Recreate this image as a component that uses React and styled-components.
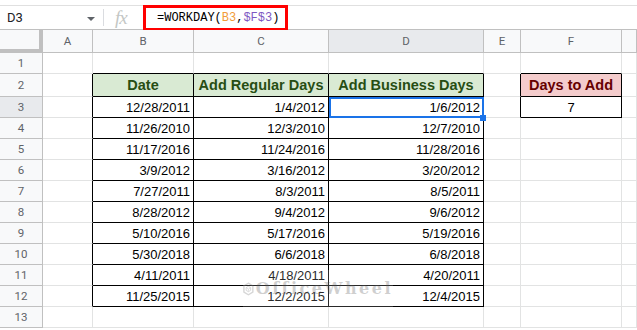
import React from "react";
import styled, { createGlobalStyle } from "styled-components";

const GlobalStyle = createGlobalStyle`
  body {
    margin: 0;
    background: #fff;
    font-family: "Liberation Sans", Arial, sans-serif;
    overflow: hidden;
  }
`;

const Page = styled.div`
  position: relative;
  width: 637px;
  height: 330px;
  overflow: hidden;
`;

const FormulaBar = styled.div`
  margin-top: 5px;
  height: 25px;
  box-sizing: border-box;
  border-top: 1px solid #e0e0e0;
  border-bottom: 1px solid #c0c0c0;
  display: flex;
  align-items: center;
`;

const NameBox = styled.div`
  width: 103px;
  height: 100%;
  box-sizing: border-box;
  padding: 0 8px 0 7px;
  display: flex;
  align-items: center;
  justify-content: space-between;
  font-family: Roboto, "Liberation Sans", sans-serif;
  font-size: 13px;
  color: #202124;
`;

const Caret = styled.span`
  width: 0;
  height: 0;
  border-left: 4px solid transparent;
  border-right: 4px solid transparent;
  border-top: 4px solid #5f6368;
  margin-top: 2px;
`;

const Divider = styled.div`
  width: 1px;
  height: 17px;
  background: #dadce0;
`;

const FxLabel = styled.div`
  width: 39px;
  padding-left: 11px;
  box-sizing: border-box;
  font-family: "Liberation Serif", "Times New Roman", serif;
  font-style: italic;
  font-size: 19px;
  color: #c4c7c5;
  letter-spacing: -1px;
`;

const FormulaField = styled.div`
  width: 145px;
  height: 26px;
  box-sizing: border-box;
  border: 3px solid #ff0000;
  padding-left: 11px;
  display: flex;
  align-items: center;
  font-family: "Liberation Mono", "Courier New", monospace;
  font-size: 12px;
  color: #000;
`;

const Ref = styled.span`
  color: ${(p) => p.$color};
`;

const Sheet = styled.div`
  display: grid;
  grid-template-columns: 43px 50px 101px 135px 155px 37px 101px 1fr;
  grid-template-rows: 23px 21px 23px repeat(11, 21px);
`;

const Cell = styled.div`
  position: relative;
  box-sizing: border-box;
  border-right: 1px solid ${(p) => p.$right};
  border-bottom: 1px solid ${(p) => p.$bottom};
  background: ${(p) => p.$bg || "#fff"};
  display: flex;
  align-items: center;
  justify-content: ${(p) => p.$align || "flex-end"};
  padding: 0 3px;
  font-size: 13px;
  color: #000;
  white-space: nowrap;
`;

const Corner = styled.div`
  box-sizing: border-box;
  background: #f8f9fa;
  border-right: 4px solid #c0c0c0;
  border-bottom: 4px solid #c0c0c0;
`;

const HeadCell = styled.div`
  box-sizing: border-box;
  background: ${(p) => (p.$active ? "#e8eaed" : "#f8f9fa")};
  border-right: 1px solid #c0c0c0;
  border-bottom: 1px solid #c0c0c0;
  display: flex;
  align-items: center;
  justify-content: center;
  font-family: Roboto, "Liberation Sans", sans-serif;
  font-size: 11.5px;
  color: #5f6368;
`;

const Heading = styled.span`
  font-weight: bold;
  font-size: 14.5px;
  color: ${(p) => p.$color};
`;

const Selection = styled.div`
  position: absolute;
  top: 0;
  left: 0;
  right: -1px;
  bottom: -1px;
  border: 2px solid #1a73e8;
  z-index: 2;
  pointer-events: none;
`;

const Handle = styled.div`
  position: absolute;
  right: -3px;
  bottom: -4px;
  width: 6px;
  height: 6px;
  background: #1a73e8;
  z-index: 3;
`;

const Watermark = styled.div`
  position: absolute;
  left: 243px;
  top: 270px;
  width: 150px;
  height: 37px;
  display: flex;
  align-items: center;
  gap: 2px;
  background: rgba(255, 255, 255, 0.4);
  opacity: 0.4;
  z-index: 4;
`;

const MarkText = styled.span`
  font-family: "DejaVu Serif", "Liberation Serif", serif;
  font-weight: bold;
  font-size: 16px;
  letter-spacing: 2.5px;
  color: #8a8a8a;
`;

const COLS = ["A", "B", "C", "D", "E", "F", ""];

const DATA = [
  ["12/28/2011", "1/4/2012", "1/6/2012"],
  ["11/26/2010", "12/3/2010", "12/7/2010"],
  ["11/17/2016", "11/24/2016", "11/28/2016"],
  ["3/9/2012", "3/16/2012", "3/20/2012"],
  ["7/27/2011", "8/3/2011", "8/5/2011"],
  ["8/28/2012", "9/4/2012", "9/6/2012"],
  ["5/10/2016", "5/17/2016", "5/19/2016"],
  ["5/30/2018", "6/6/2018", "6/8/2018"],
  ["4/11/2011", "4/18/2011", "4/20/2011"],
  ["11/25/2015", "12/2/2015", "12/4/2015"],
];

const GREEN_HEADS = ["Date", "Add Regular Days", "Add Business Days"];

// col index: 1 = A ... 7 = G
const inTable = (r, c) =>
  (r >= 2 && r <= 12 && c >= 2 && c <= 4) || (r >= 2 && r <= 3 && c === 6);

const GRID = "#e2e3e3";
const BLACK = "#000";

function renderCell(r, c) {
  const right = inTable(r, c) || inTable(r, c + 1) ? BLACK : GRID;
  const bottom = inTable(r, c) || inTable(r + 1, c) ? BLACK : GRID;
  let bg;
  let align;
  let content = null;

  if (r === 2 && c >= 2 && c <= 4) {
    bg = "#d9ead3";
    align = "center";
    content = <Heading $color="#274e13">{GREEN_HEADS[c - 2]}</Heading>;
  } else if (r === 2 && c === 6) {
    bg = "#f4cccc";
    align = "center";
    content = <Heading $color="#660000">Days to Add</Heading>;
  } else if (r === 3 && c === 6) {
    align = "center";
    content = "7";
  } else if (r >= 3 && r <= 12 && c >= 2 && c <= 4) {
    content = DATA[r - 3][c - 2];
  }

  const selected = r === 3 && c === 4;

  return (
    <Cell key={`${r}-${c}`} $right={right} $bottom={bottom} $bg={bg} $align={align}>
      {content}
      {selected && (
        <>
          <Selection />
          <Handle />
        </>
      )}
    </Cell>
  );
}

function LogoMark() {
  return (
    <svg width="24" height="30" viewBox="0 0 24 30">
      <path d="M12 2 L22 8 L22 22 L12 28 L2 22 L2 8 Z" fill="none" stroke="#9a9a9a" strokeWidth="3" />
      <path d="M12 9 L17 12 L17 18 L12 21 L7 18 L7 12 Z" fill="none" stroke="#9a9a9a" strokeWidth="2" />
      <path d="M12 15 L17 12 M12 15 L12 21 M12 15 L7 12" stroke="#9a9a9a" strokeWidth="1.5" />
    </svg>
  );
}

export default function App() {
  const rows = [];
  for (let r = 1; r <= 13; r++) {
    rows.push(
      <HeadCell key={`h${r}`} $active={r === 3}>
        {r}
      </HeadCell>
    );
    for (let c = 1; c <= 7; c++) rows.push(renderCell(r, c));
  }

  return (
    <Page>
      <GlobalStyle />
      <FormulaBar>
        <NameBox>
          D3
          <Caret />
        </NameBox>
        <Divider />
        <FxLabel>fx</FxLabel>
        <FormulaField>
          =WORKDAY(<Ref $color="#f29b38">B3</Ref>,<Ref $color="#7e57c2">$F$3</Ref>)
        </FormulaField>
      </FormulaBar>
      <Sheet>
        <Corner />
        {COLS.map((col, i) => (
          <HeadCell key={i} $active={col === "D"}>
            {col}
          </HeadCell>
        ))}
        {rows}
      </Sheet>
      <Watermark>
        <LogoMark />
        <MarkText>OfficeWheel</MarkText>
      </Watermark>
    </Page>
  );
}
